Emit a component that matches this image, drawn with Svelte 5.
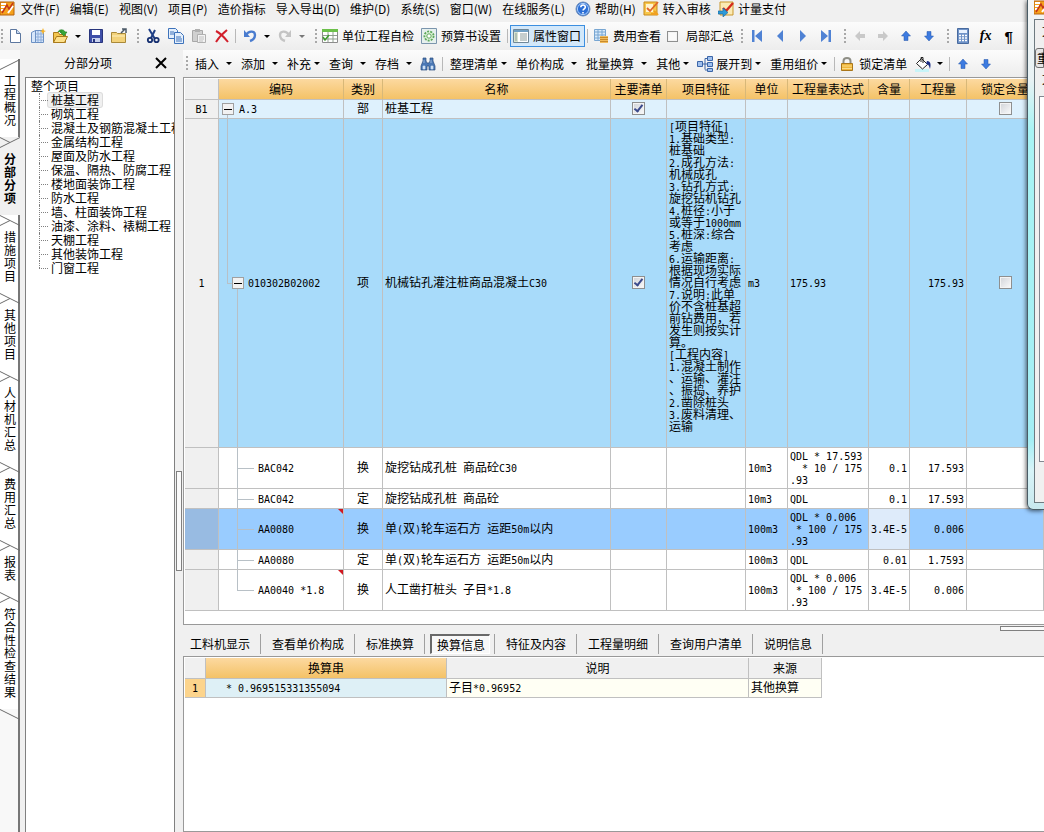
<script>
	const sideTabs = ['工程概况', '分部分项', '措施项目', '其他项目', '人材机汇总', '费用汇总', '报表', '符合性检查结果'];
	let activeSide = $state(1);

	const treeItems = [
		'桩基工程', '砌筑工程', '混凝土及钢筋混凝土工程', '金属结构工程', '屋面及防水工程',
		'保温、隔热、防腐工程', '楼地面装饰工程', '防水工程', '墙、柱面装饰工程',
		'油漆、涂料、裱糊工程', '天棚工程', '其他装饰工程', '门窗工程'
	];
	let activeTree = $state(0);

	const menus = [
		{ label: '文件(F)' }, { label: '编辑(E)' }, { label: '视图(V)' }, { label: '项目(P)' },
		{ label: '造价指标' }, { label: '导入导出(D)' }, { label: '维护(D)' }, { label: '系统(S)' },
		{ label: '窗口(W)' }, { label: '在线服务(L)' }, { label: '帮助(H)', icon: 'help' },
		{ label: '转入审核', icon: 'audit' }, { label: '计量支付', icon: 'pay' }
	];

	const feature = `[项目特征]
1.基础类型:
桩基础
2.成孔方法:
机械成孔
3.钻孔方式:
旋挖钻机钻孔
4.桩径:小于
或等于1000mm
5.桩深:综合
考虑
6.运输距离:
根据现场实际
情况自行考虑
7.说明:此单
价不含桩基超
前钻费用，若
发生则按实计
算。
[工程内容]
1.混凝土制作
、运输、灌注
、振捣、养护
2.凿除桩头
3.废料清理、
运输`;

	let rows = $state([
		{ no: 'B1', level: 0, code: 'A.3', kind: '部', name: '桩基工程', main: true, lock: false, cls: 'section' },
		{ no: '1', level: 1, code: '010302B02002', kind: '项', name: '机械钻孔灌注桩商品混凝土C30', main: true, lock: false, feature, unit: 'm3', expr: '175.93', qty: '175.93', cls: 'item' },
		{ level: 2, code: 'BAC042', kind: '换', name: '旋挖钻成孔桩 商品砼C30', unit: '10m3', expr: 'QDL * 17.593\n  * 10 / 175\n.93', ratio: '0.1', qty: '17.593' },
		{ level: 2, code: 'BAC042', kind: '定', name: '旋挖钻成孔桩 商品砼', unit: '10m3', expr: 'QDL', ratio: '0.1', qty: '17.593' },
		{ level: 2, code: 'AA0080', kind: '换', name: '单(双)轮车运石方 运距50m以内', unit: '100m3', expr: 'QDL * 0.006\n * 100 / 175\n.93', ratio: '3.4E-5', qty: '0.006', mark: true, cls: 'selected' },
		{ level: 2, code: 'AA0080', kind: '定', name: '单(双)轮车运石方 运距50m以内', unit: '100m3', expr: 'QDL', ratio: '0.01', qty: '1.7593' },
		{ level: 2, code: 'AA0040 *1.8', kind: '换', name: '人工凿打桩头 子目*1.8', unit: '100m3', expr: 'QDL * 0.006\n * 100 / 175\n.93', ratio: '3.4E-5', qty: '0.006', mark: true, last: true }
	]);

	const detailTabs = ['工料机显示', '查看单价构成', '标准换算', '换算信息', '特征及内容', '工程量明细', '查询用户清单', '说明信息'];
	let activeDetail = $state(3);
	let partial = $state(false);

	// odd entries are the half-width runs
	const runs = (text) => (text ?? '').split(/([\x20-\x7e]+)/);
</script>

{#snippet mixed(text)}{#each runs(text) as run, i}{#if i % 2}<span class="half">{run}</span>{:else}{run}{/if}{/each}{/snippet}

{#snippet icon(name)}
	<svg class="icon" viewBox="0 0 16 16" aria-hidden="true">
		{#if name === 'app'}
			<path d="M0 1h14v13H0z" fill="#f6a21c" stroke="#b8630c" />
			<path d="M1 3h5M1 6h4M1 9h3M8 12l5-7" stroke="#fff" stroke-width="2" />
			<path d="M2 12L7 4l2 4 4-6" stroke="#c3351a" stroke-width="1.5" fill="none" />
		{:else if name === 'help'}
			<circle cx="8" cy="8" r="7" fill="#2c6fd6" stroke="#6d8cb8" />
			<circle cx="8" cy="8" r="5.6" fill="none" stroke="#a9cdfa" />
			<path d="M5.8 6.3c0-3 4.6-3 4.6-.2 0 1.700-2.300 1.800-2.300 3.400M8 11v1.600" stroke="#fff" stroke-width="1.600" fill="none" />
		{:else if name === 'audit'}
			<path d="M1 1h13v13H1z" fill="#f7c64a" stroke="#c98a1b" />
			<path d="M3 3h7v8H3z" fill="#fff3cf" />
			<path d="M4 7l3 3 8-9" stroke="#e0662a" stroke-width="1.800" fill="none" />
			<path d="M8 13h6M11 10l4 4" stroke="#f0a020" stroke-width="2" />
		{:else if name === 'pay'}
			<path d="M2 1h13v13H2z" fill="#fbeab4" stroke="#c9972c" />
			<path d="M5 7l3 3 7-8" stroke="#d42a1c" stroke-width="2.400" fill="none" />
			<path d="M0 10h5V7l5 4.500L5 16v-3H0z" fill="#2c9ad8" stroke="#17639c" stroke-width=".6" />
		{:else if name === 'new'}
			<path d="M3.500 1.500h6l4 4v9h-10z" fill="#fff" stroke="#5c779f" />
			<path d="M9.500 1.500v4h4" fill="#c8daf2" stroke="#5c779f" />
		{:else if name === 'sheets'}
			<path d="M1.500 4.500l4-2v12h-4zM5.500 2.500h8v12h-8z" fill="#d6e6fa" stroke="#6c91c4" />
			<path d="M8 3v11M11 3v11M6 6h7M6 9h7M6 12h7" stroke="#8eaedb" />
			<path d="M13 0l1 2.500 2 .5-2 1-1 2.500-1-2.500-2-1 2-.5z" fill="#f7b52c" />
		{:else if name === 'open'}
			<path d="M.5 14.500v-10h5l1 2h6v8z" fill="#f3c64f" stroke="#a97a1b" />
			<path d="M.5 14.500l3-6h11l-3 6z" fill="#fde08a" stroke="#a97a1b" />
			<path d="M5 4c1-3 6-3 7 0h2l-3 4-4-4h2" fill="#37a637" stroke="#1d7a24" stroke-width=".6" />
		{:else if name === 'save'}
			<path d="M1.500 1.500h13v13h-13z" fill="#3f4fa8" stroke="#28357c" />
			<path d="M4 2h8v5H4z" fill="#fff" />
			<path d="M4 10h8v4H4z" fill="#c9d2ee" />
			<path d="M5 11h2v3H5z" fill="#28357c" />
		{:else if name === 'folder'}
			<path d="M.5 4.500h5l1 1h8v9H.5z" fill="#f3d27a" stroke="#a98939" />
			<path d="M1 8h13" stroke="#fdf0c0" />
			<path d="M10 5l4-4M11 1h4v4" stroke="#4c5a68" stroke-width="1.500" fill="none" />
		{:else if name === 'cut'}
			<path d="M4 1l6 10M10 2L6 10" stroke="#1f3f86" stroke-width="2" />
			<circle cx="5" cy="12" r="2.200" fill="none" stroke="#152f70" stroke-width="1.800" />
			<circle cx="11.500" cy="12" r="2.200" fill="none" stroke="#152f70" stroke-width="1.800" />
		{:else if name === 'copy'}
			<path d="M.5 .5h7l2 2v8h-9z" fill="#e4effc" stroke="#3e73bb" />
			<path d="M6.500 4.500h6l3 3v8h-9z" fill="#e4effc" stroke="#3e73bb" />
			<path d="M2 4h4M2 6h4M8 9h5M8 11h6M8 13h6" stroke="#3e73bb" />
		{:else if name === 'paste'}
			<path d="M1.500 2.500h10v11h-10z" fill="#d0d0d0" stroke="#a8a8a8" />
			<path d="M4 1h5v3H4z" fill="#b0b0b0" />
			<path d="M6.500 6.500h8v8h-8z" fill="#f2f2f2" stroke="#b0b0b0" />
			<path d="M8 9h5M8 11h5M8 13h4" stroke="#c0c0c0" />
		{:else if name === 'delete'}
			<path d="M2 3c4 2 8 6 12 11M13 2C8 6 5 9 2 14" stroke="#d21f2b" stroke-width="2" fill="none" />
		{:else if name === 'undo' || name === 'redo'}
			<path d="M4 7c3-5 9-4 9 0 0 3-2 5-5 6" stroke={name === 'undo' ? '#4a7ccf' : '#c4c4c4'} stroke-width="2.400" fill="none" transform={name === 'redo' ? 'matrix(-1 0 0 1 16 0)' : undefined} />
			<path d="M2 2v7h6z" fill={name === 'undo' ? '#4a7ccf' : '#c4c4c4'} transform={name === 'redo' ? 'matrix(-1 0 0 1 16 0)' : undefined} />
		{:else if name === 'check-sheet'}
			<path d="M.5 1.500h15v13H.5z" fill="#fff" stroke="#8c8c8c" />
			<path d="M0 1h16v3H0z" fill="#6cc04a" />
			<path d="M1 7.500h14M1 11h14M6 4v10M11 4v10" stroke="#8f9f8f" />
			<path d="M1 9l2 3 4-5" stroke="#3c9b2c" stroke-width="1.500" fill="none" />
		{:else if name === 'settings'}
			<path d="M.5 .5h15v15H.5z" fill="#e6f0ee" stroke="#7b95ad" />
			<circle cx="8" cy="8" r="4.600" fill="#dff2da" stroke="#5da85a" stroke-width="1.800" stroke-dasharray="2 1.200" />
			<circle cx="8" cy="8" r="2.200" fill="#fff" stroke="#5da85a" />
		{:else if name === 'props'}
			<path d="M.5 1.500h15v13H.5z" fill="#fff" stroke="#6f8798" />
			<path d="M1 2h14v2H1z" fill="#6f9fc4" />
			<path d="M1 4h4v10H1z" fill="#d8e4d0" />
			<path d="M2 6h2M2 8h2M2 10h2M2 12h2M7 6h7M7 8h7M7 10h7M7 12h7" stroke="#8a9c9c" />
		{:else if name === 'fee'}
			<path d="M1.500 1.500h11v11h-11z" fill="#d8eafa" stroke="#78a6d2" />
			<path d="M2 4h10M2 7h10M2 10h10M5 2v10M9 2v10" stroke="#78a6d2" />
			<path d="M7 8h8v7H7z" fill="#f2bc5c" />
			<path d="M7 9.500h8M7 11.500h8M7 13.500h8" stroke="#c88a2c" />
		{:else if name === 'first'}
			<path d="M3 2h2.500v12H3zM13 2v12L6 8z" fill="#4f82d4" />
		{:else if name === 'prev'}
			<path d="M11 2v12L5 8z" fill="#4f82d4" />
		{:else if name === 'next'}
			<path d="M5 2v12l6-6z" fill="#4f82d4" />
		{:else if name === 'last'}
			<path d="M10.500 2H13v12h-2.500zM3 2v12l7-6z" fill="#4f82d4" />
		{:else if name === 'left'}
			<path d="M8 3v3h5v4H8v3L3 8z" fill="#c9c9c9" />
		{:else if name === 'right'}
			<path d="M8 3v3H3v4h5v3l5-5z" fill="#c9c9c9" />
		{:else if name === 'up'}
			<path d="M8 3l4.500 5H10v4.500H6V8H3.500z" fill="#3d7be0" stroke="#2456a8" stroke-width=".5" />
		{:else if name === 'down'}
			<path d="M8 13l4.500-5H10V3.500H6V8H3.500z" fill="#3d7be0" stroke="#2456a8" stroke-width=".5" />
		{:else if name === 'calc'}
			<path d="M2.500 .5h11v15h-11z" fill="#6f93c8" stroke="#486a9e" />
			<path d="M4 2h8v3H4z" fill="#e8f2ff" />
			<path d="M4 7.500h8M4 10h8M4 12.500h8" stroke="#fff" stroke-width="1.500" stroke-dasharray="2 1" />
		{:else if name === 'find'}
			<path d="M3 2h3v3l1 2h2l1-2V2h3v3l2 5v4H9v-4H7v4H1v-4l2-5z" fill="#4b78b5" stroke="#2b4d80" stroke-width=".7" />
			<path d="M3 10h2v3H3zM11 10h2v3h-2zM4 4v3M11 4v3" fill="#cfe0f5" stroke="#cfe0f5" stroke-width=".6" />
		{:else if name === 'expand'}
			<path d="M.5 5.500h5v5h-5zM10.500 .5h5v4h-5zM10.500 6.500h5v4h-5zM10.500 12.500h5v3h-5z" fill="#9fc0ee" stroke="#3c66a8" />
			<path d="M6 8h4M8 2.500v11M8 2.500h2M8 14h2" stroke="#3c66a8" fill="none" />
		{:else if name === 'lock'}
			<path d="M4.500 8V5c0-4 7-4 7 0v3" stroke="#8f8f86" stroke-width="2" fill="none" />
			<path d="M2.500 7.500h11v7h-11z" fill="#efb63c" stroke="#a9761b" />
			<path d="M3 10h10M3 12.500h10" stroke="#fbdc85" />
		{:else if name === 'paint'}
			<path d="M0 13h14v3H0z" fill="#c8f4f8" />
			<path d="M6.500 2.500l6 6-5 4.500-6-5.500z" fill="#fff" stroke="#222" />
			<path d="M6 6V1.500h2V7" stroke="#222" fill="none" />
			<path d="M12 5c4 0 4 4 3 8-1-4-2-5-4-5z" fill="#1c2f86" />
		{/if}
	</svg>
{/snippet}

{#snippet tool(name, label)}
	<button class="tool" aria-label={label}>{@render icon(name)}</button>
{/snippet}

{#snippet drop(label, cls)}
	<button class="drop {cls}">{label}<i class="arrow"></i></button>
{/snippet}

<div class="app">
	<nav class="menu">
		{@render icon('app')}
		{#each menus as m}
			<button class="menu-item" class:with-icon={m.icon}>
				{#if m.icon}{@render icon(m.icon)}{/if}{m.label}
			</button>
		{/each}
	</nav>

	<div class="toolbar">
		<span class="grip first"></span>
		{@render tool('new', '新建')}
		{@render tool('sheets', '新建表')}
		{@render tool('open', '打开')}
		<button class="arrow-btn" aria-label="最近文件"><i class="arrow"></i></button>
		{@render tool('save', '保存')}
		{@render tool('folder', '目录')}
		<span class="grip"></span>
		{@render tool('cut', '剪切')}
		{@render tool('copy', '复制')}
		{@render tool('paste', '粘贴')}
		{@render tool('delete', '删除')}
		<span class="sep"></span>
		{@render tool('undo', '撤销')}
		<button class="arrow-btn" aria-label="撤销列表"><i class="arrow"></i></button>
		{@render tool('redo', '重做')}
		<button class="arrow-btn" aria-label="重做列表"><i class="arrow dim"></i></button>
		<span class="grip"></span>
		<button class="text-tool">{@render icon('check-sheet')}单位工程自检</button>
		<button class="text-tool">{@render icon('settings')}预算书设置</button>
		<span class="sep"></span>
		<button class="text-tool pressed">{@render icon('props')}属性窗口</button>
		<span class="sep"></span>
		<button class="text-tool">{@render icon('fee')}费用查看</button>
		<label class="partial"><input type="checkbox" class="flat" bind:checked={partial} />局部汇总</label>
		<span class="grip"></span>
		{@render tool('first', '首条')}
		{@render tool('prev', '上一条')}
		{@render tool('next', '下一条')}
		{@render tool('last', '末条')}
		<span class="grip"></span>
		{@render tool('left', '升级')}
		{@render tool('right', '降级')}
		{@render tool('up', '上移')}
		{@render tool('down', '下移')}
		<span class="grip"></span>
		{@render tool('calc', '计算器')}
		<button class="tool fx">fx</button>
		<button class="tool para">¶</button>
	</div>

	<div class="body">
		<div class="side-tabs">
			<svg class="edge" viewBox="0 0 20 11"><path d="M0 10.500L20 .5" /></svg>
			{#each sideTabs as tab, i}
				<button class="side-tab" class:active={i === activeSide} onclick={() => (activeSide = i)}>
					{tab}
					<svg class="fold" viewBox="0 0 20 11">
						{#if i + 1 === activeSide}
							<path class="fill" d="M0 10.500L20 1v10H0z" />
							<path d="M0 .5L10 5.500M0 10.500L20 .5" />
						{:else}
							<path d={i === sideTabs.length - 1 ? 'M0 .5L20 10.500' : 'M0 .5L20 10.500M0 10.500L10 5.500'} />
						{/if}
					</svg>
				</button>
			{/each}
			<div class="side-rest"></div>
		</div>

		<aside class="panel">
			<header>
				<span>分部分项</span>
				<button aria-label="关闭">
					<svg viewBox="0 0 12 12"><path d="M1 1l10 10M11 1L1 11" /></svg>
				</button>
			</header>
			<div class="tree">
				<div class="root">整个项目</div>
				<ul>
					{#each treeItems as item, i}
						<li><button class:on={i === activeTree} onclick={() => (activeTree = i)}>{item}</button></li>
					{/each}
				</ul>
			</div>
		</aside>

		<div class="v-split"><span></span></div>

		<main>
			<div class="toolbar second">
				<span class="grip first"></span>
				{@render drop('插入', 'wide')}
				{@render drop('添加', 'wide')}
				{@render drop('补充', 'tight')}
				{@render drop('查询', 'wide')}
				{@render drop('存档', 'wide near')}
				{@render tool('find', '查找')}
				<span class="sep"></span>
				{@render drop('整理清单', 'tight')}
				{@render drop('单价构成', 'wide')}
				{@render drop('批量换算', 'wide')}
				{@render drop('其他', 'tight near')}
				{@render tool('expand', '展开')}
				{@render drop('展开到', 'tight')}
				{@render drop('重用组价', 'tight near')}
				<span class="sep"></span>
				<button class="text-tool">{@render icon('lock')}锁定清单</button>
				{@render tool('paint', '填充颜色')}
				<button class="arrow-btn" aria-label="选择颜色"><i class="arrow"></i></button>
				<span class="sep"></span>
				{@render tool('up', '上移')}
				{@render tool('down', '下移')}
			</div>

			<section class="grid">
				<table>
					<colgroup>
						<col class="c-no" /><col class="c-code" /><col class="c-kind" /><col /><col class="c-main" />
						<col class="c-feature" /><col class="c-unit" /><col class="c-expr" /><col class="c-ratio" />
						<col class="c-qty" /><col class="c-lock" />
					</colgroup>
					<thead>
						<tr>
							<td class="no"></td>
							<th>编码</th>
							<th>类别</th>
							<th>名称</th>
							<th>主要清单</th>
							<th>项目特征</th>
							<th>单位</th>
							<th>工程量表达式</th>
							<th>含量</th>
							<th>工程量</th>
							<th>锁定含量</th>
						</tr>
					</thead>
					<tbody>
						{#each rows as row}
							<tr class={row.cls}>
								<td class="no">{@render mixed(row.no)}</td>
								<td class="code level{row.level}" class:end={row.last}>
									{#if row.level < 2}<button class="toggle" aria-label="折叠"></button>{/if}
									{@render mixed(row.code)}
									{#if row.mark}<i class="mark"></i>{/if}
								</td>
								<td class="mid">{row.kind}</td>
								<td class="pre">{@render mixed(row.name)}</td>
								<td class="mid">
									{#if row.main !== undefined}<input type="checkbox" aria-label="主要清单" bind:checked={row.main} />{/if}
								</td>
								<td class="pre feature">{@render mixed(row.feature)}</td>
								<td>{@render mixed(row.unit)}</td>
								<td class="pre">{@render mixed(row.expr)}</td>
								<td class="num ratio">{@render mixed(row.ratio)}</td>
								<td class="num">{@render mixed(row.qty)}</td>
								<td class="mid">
									{#if row.lock !== undefined}<input type="checkbox" aria-label="锁定含量" bind:checked={row.lock} />{/if}
								</td>
							</tr>
						{/each}
					</tbody>
				</table>
			</section>

			<div class="h-split"><span></span></div>

			<div class="detail-tabs">
				{#each detailTabs as tab, i}
					<div class="slot" class:active={i === activeDetail}>
						<button onclick={() => (activeDetail = i)}>{tab}</button>
					</div>
				{/each}
			</div>

			<section class="detail">
				<table>
					<thead>
						<tr>
							<td class="d-no"></td>
							<th class="d-str">换算串</th>
							<th class="d-note">说明</th>
							<th class="d-src">来源</th>
						</tr>
					</thead>
					<tbody>
						<tr>
							<td class="d-no on">{@render mixed('1')}</td>
							<td class="d-str">{@render mixed('* 0.969515331355094')}</td>
							<td>{@render mixed('子目*0.96952')}</td>
							<td>其他换算</td>
						</tr>
					</tbody>
				</table>
			</section>
		</main>
	</div>

	<!-- floating window that runs off the right edge -->
	<div class="float">
		<div class="float-title">{@render icon('app')}</div>
		<div class="float-body">
			<span class="float-text">文</span>
			<button>重用</button>
			<span class="float-text">文</span>
			<div class="float-list"></div>
		</div>
	</div>
</div>

<style>
	:global(body) { margin: 0; background: #f0f0f0; }

	.app {
		position: relative;
		display: flex;
		flex-direction: column;
		height: 100vh;
		overflow: hidden;
		background: #f0f0f0;
		color: #000;
		font: 12px/14px "Noto Sans CJK SC", "Liberation Sans", sans-serif;
	}
	button {
		margin: 0;
		padding: 0;
		border: 0;
		background: none;
		color: inherit;
		font: inherit;
		white-space: nowrap;
	}
	.icon { display: block; flex: none; width: 16px; height: 16px; }
	.half { font-family: "DejaVu Sans Mono", "Liberation Mono", monospace; font-size: 10px; line-height: 0; }

	.menu { display: flex; align-items: center; gap: 10px; height: 22px; flex: none; padding-bottom: 4px; box-sizing: border-box; }
	.menu > .icon { margin-right: -5px; }
	.menu-item { display: flex; align-items: center; gap: 4px; flex: none; }
	.menu-item.with-icon { margin-right: -3px; }

	.toolbar {
		display: flex;
		align-items: center;
		flex: none;
		height: 28px;
		background: linear-gradient(#fcfcfc, #ededed);
	}
	.toolbar > * { flex: none; }
	.toolbar.second { height: 27px; }
	.grip {
		width: 2px;
		height: 15px;
		margin: 0 2px 0 7px;
		background: repeating-linear-gradient(#a8a8a8 0 2px, transparent 2px 4px);
	}
	.grip.first { margin: 0 0 0 1px; }
	.second .grip.first { margin: 0 7px 0 3px; }
	.sep { width: 1px; height: 14px; margin: 0 2px; background: #b8b8b8; }
	.second .sep { margin: 0 1px 0 3px; }
	.sep + .drop { margin-left: 6px; }
	.tool { display: flex; align-items: center; justify-content: center; width: 23px; height: 22px; }
	.fx { font: italic bold 14px/14px "Liberation Serif", serif; }
	.para { font: bold 15px/15px "Liberation Sans", sans-serif; }
	.arrow-btn { display: flex; align-items: center; justify-content: center; width: 12px; height: 22px; }
	.arrow {
		width: 0;
		height: 0;
		border: 3px solid transparent;
		border-top-color: #000;
		border-bottom: 0;
	}
	.arrow.dim { border-top-color: #777; }
	.text-tool { display: flex; align-items: center; gap: 4px; height: 22px; padding: 0 4px 0 3px; }
	.pressed { border: 1px solid #3c8fe0; background: #d3e8fa; padding: 0 3px 0 2px; }
	.partial { display: flex; align-items: center; gap: 8px; margin-left: 2px; }
	.drop { display: flex; align-items: center; gap: 7px; padding-right: 9px; }
	.drop.tight { gap: 3px; }
	.drop.near { padding-right: 4px; }

	.body { display: flex; flex: 1; min-height: 0; }

	.side-tabs {
		display: flex;
		flex-direction: column;
		width: 20px;
		flex: none;
		box-sizing: border-box;
		padding-top: 9px;
		background: #f8f8f8;
	}
	.side-tab {
		position: relative;
		width: 20px;
		box-sizing: border-box;
		padding: 15px 3px 11px 4px;
		border-right: 2px solid #777;
		background: #fff;
		line-height: 13px;
		white-space: normal;
		word-break: break-all;
	}
	.side-tab.active { background: #f0f0f0; border-right-color: #f0f0f0; font-weight: bold; }
	.edge, .fold { display: block; width: 20px; height: 11px; fill: none; stroke: #6b6b6b; }
	.edge { margin-bottom: -11px; z-index: 1; }
	.fold { position: absolute; left: 0; bottom: -11px; z-index: 1; }
	.fold .fill { fill: #f0f0f0; stroke: none; }
	.side-rest { flex: 1; border-right: 2px solid #777; }

	.panel { display: flex; flex-direction: column; width: 150px; flex: none; margin-left: 5px; }
	.panel header { display: flex; align-items: center; box-sizing: border-box; height: 27px; padding: 0 8px 2px 39px; justify-content: space-between; }
	.panel header svg { display: block; width: 12px; height: 12px; stroke: #000; stroke-width: 2; }
	.tree { flex: 1; overflow: hidden; border: 1px solid #808080; border-bottom: 0; background: #fff; padding: 1px 0 0 5px; }
	.root { line-height: 14px; }
	.tree ul { list-style: none; margin: 0; padding: 0 0 0 8px; }
	.tree li { position: relative; height: 14px; padding-left: 9px; }
	.tree li::before { content: ''; position: absolute; left: 0; top: 0; height: 14px; border-left: 1px dotted #808080; }
	.tree li:last-child::before { height: 7px; }
	.tree li::after { content: ''; position: absolute; left: 0; top: 7px; width: 9px; border-top: 1px dotted #808080; }
	.tree li button { display: block; padding: 0 3px; line-height: 14px; }
	.tree li button.on { border-radius: 2px; background: #f0f0f0; box-shadow: 0 0 0 1px #dcdcdc; }

	.v-split { display: flex; flex-direction: column; width: 8px; flex: none; }
	.v-split span { width: 4px; height: 98px; margin: 421px 0 0 1px; border: 1px solid #808080; background: #fafafa; }

	main { display: flex; flex-direction: column; flex: 1; min-width: 0; }

	.grid { border: 1px solid #999; border-right: 0; background: #fff; padding: 1px 0 13px 1px; }
	table { border-collapse: separate; border-spacing: 0; }
	.grid table { width: 100%; table-layout: fixed; }
	.c-no { width: 34px; }
	.c-code { width: 125px; }
	.c-kind { width: 39px; }
	.c-main { width: 56px; }
	.c-feature { width: 79px; }
	.c-unit { width: 42px; }
	.c-expr { width: 81px; }
	.c-ratio { width: 41px; }
	.c-qty { width: 57px; }
	.c-lock { width: 77px; }
	th, td {
		box-sizing: border-box;
		height: 20px;
		padding: 1px 2px 3px;
		border-right: 1px solid #c0c0c0;
		border-bottom: 1px solid #c0c0c0;
		line-height: 12px;
		white-space: nowrap;
	}
	th, thead td { height: 21px; }
	th { padding: 0 0 1px; background: linear-gradient(#fcd9a0, #f4c267); border-right-color: #d8b878; font-weight: normal; text-align: center; }
	.no { text-align: center; background: #f0f0f0; }
	.mid { text-align: center; }
	.num { text-align: right; }
	.pre { white-space: pre; }
	.section td { height: 19px; background: #def1fd; }
	.item td { background: #a8dbfa; }
	.item .feature { padding-bottom: 15px; vertical-align: top; }
	.selected td { background: #99ccff; }
	.selected .ratio { background: #deebfa; }
	.section .no, .item .no { background: #f0f0f0; }
	.selected .no { background: #98bbe2; }

	.code { position: relative; }
	.level0 { padding-left: 20px; }
	.level1 { padding-left: 29px; }
	.level2 { padding-left: 39px; }
	.code::before, .code::after { content: ''; position: absolute; border: 0 solid #b8c0c6; }
	.level0::before { left: 8px; top: 50%; bottom: 0; border-left-width: 1px; }
	.level1::before { left: 8px; top: 0; height: 50%; width: 8px; border-left-width: 1px; border-bottom-width: 1px; }
	.level1::after { left: 18px; top: 50%; bottom: 0; border-left-width: 1px; }
	.level2::before { left: 18px; top: 0; height: 50%; width: 16px; border-left-width: 1px; border-bottom-width: 1px; }
	.level2::after { left: 18px; top: 50%; bottom: 0; border-left-width: 1px; }
	.level2.end::after { display: none; }
	.toggle {
		position: absolute;
		z-index: 1;
		left: 3px;
		top: calc(50% - 6px);
		width: 12px;
		height: 12px;
		border: 1px solid #a0a0a0;
		background: linear-gradient(#000, #000) center / 8px 1px no-repeat #f2f2f2;
	}
	.level1 .toggle { left: 13px; }
	.mark { position: absolute; right: 0; top: 0; border-top: 5px solid #d01820; border-left: 5px solid transparent; }

	input[type='checkbox'] {
		appearance: none;
		position: relative;
		display: block;
		width: 13px;
		height: 13px;
		margin: 0 auto;
		border: 1px solid #8e8f8f;
		background: linear-gradient(135deg, #d0d3d8, #fbfbfb);
		box-shadow: inset 0 0 0 1px #f4f4f4;
	}
	input[type='checkbox']:checked::after {
		content: '';
		position: absolute;
		left: 3px;
		top: 0;
		width: 3px;
		height: 7px;
		border: solid #3b4a8c;
		border-width: 0 2px 2px 0;
		transform: rotate(38deg);
	}
	input.flat { width: 11px; height: 11px; margin: 0; background: #fafafa; }

	.h-split { display: flex; justify-content: flex-end; height: 9px; flex: none; }
	.h-split span { width: 43px; height: 3px; margin-top: 1px; border: 1px solid #808080; border-right: 0; background: #fafafa; }

	.detail-tabs { display: flex; height: 22px; flex: none; padding-left: 1px; }
	.slot { display: flex; align-items: center; padding: 0 10px 1px 11px; border-right: 1px solid #a0a0a0; margin-bottom: 2px; }
	.slot:first-child { padding-left: 6px; }
	.slot.active { padding: 0 4px 0 5px; }
	.slot.active button { height: 20px; padding: 0 4px 0 5px; border: 1px solid; border-color: #696969 #fff #fff #696969; border-width: 2px 1px 1px 2px; background: #f8f8f8; }

	.detail { flex: 1; border: 1px solid #999; border-right: 0; background: #fff; padding: 1px 0 0 1px; }
	.detail td { height: 19px; background: #fffff4; }
	.detail thead td, .detail .d-note, .detail .d-src { background: #f0f0f0; }
	.detail th { border-right-color: #c0c0c0; }
	.d-no { width: 21px; text-align: center; }
	.detail .d-no.on { background: #fcd48c; }
	.d-str { width: 241px; }
	.detail td.d-str { background: #def0f6; padding-left: 20px; }
	.d-note { width: 302px; }
	.d-src { width: 73px; }

	.float {
		position: absolute;
		right: 0;
		top: 0;
		width: 17px;
		height: 510px;
		box-sizing: border-box;
		display: flex;
		flex-direction: column;
		padding: 0 0 6px 6px;
		overflow: hidden;
		border-left: 1px solid #4a5c66;
		border-bottom: 1px solid #4a5c66;
		border-radius: 0 0 0 6px;
		background: linear-gradient(#f4f6f6, #e8f2f4 80px, #a8f4f4 130px, #a4eef4 440px, #d8f4f8 470px, #c8e8ee);
		box-shadow: -1px 1px 4px rgba(0, 0, 0, 0.6);
	}
	.float-title { height: 19px; flex: none; }
	.float-body { display: flex; flex-direction: column; flex: 1; overflow: hidden; border: 1px solid #6e7a80; border-right: 0; background: #f0f0f0; }
	.float-text { height: 28px; padding-left: 7px; line-height: 22px; }
	.float-body button { height: 20px; padding-left: 1px; border: 1px solid #707070; border-radius: 3px 0 0 3px; text-align: left; background: #e6e6e6; }
	.float-list { flex: 1; margin: 0 0 40px 4px; border: 1px solid #828790; border-right: 0; background: #fff; }
</style>
